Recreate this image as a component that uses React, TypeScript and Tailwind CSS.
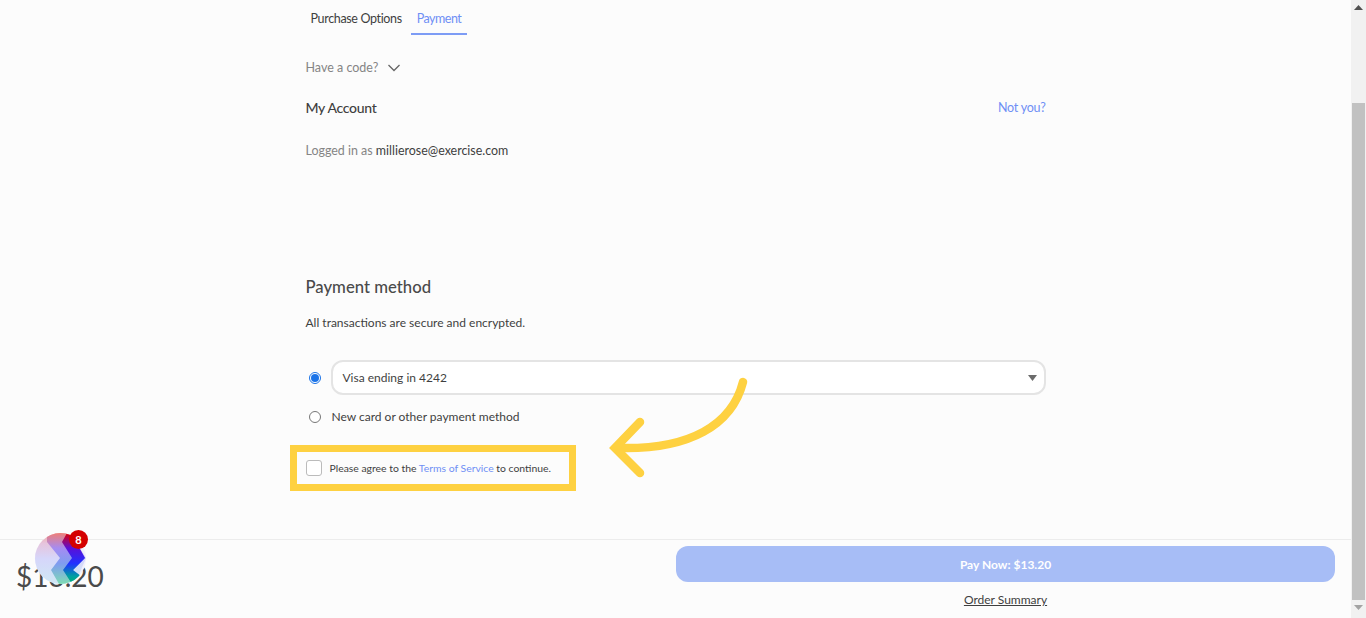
import React from "react";

function Arrow() {
  return (
    <svg className="absolute left-[600px] top-[370px]" width="160" height="115" viewBox="600 370 160 115" fill="none">
      <path d="M743 382C732 425 690 450 618 448" stroke="#fed141" strokeWidth="8.5" strokeLinecap="round" />
      <path d="M640 422L615 448L640 473" stroke="#fed141" strokeWidth="8.5" strokeLinecap="round" strokeLinejoin="miter" />
    </svg>
  );
}

function Bubble() {
  return (
    <div className="absolute left-[35px] top-[533px] h-[51px] w-[51px]">
      <div className="absolute inset-0 overflow-hidden rounded-full bg-[#f2f0fb]">
        <svg width="51" height="51" viewBox="0 0 51 51">
          <defs>
            <linearGradient id="base" x1="0" y1="0" x2="0" y2="1">
              <stop offset="0" stopColor="#f3a79f" />
              <stop offset="0.2" stopColor="#e6c4dc" />
              <stop offset="0.5" stopColor="#d6d6fa" />
              <stop offset="1" stopColor="#cfe8f4" />
            </linearGradient>
            <linearGradient id="mid" x1="0" y1="0" x2="0" y2="1">
              <stop offset="0" stopColor="#ef7f78" />
              <stop offset="0.3" stopColor="#a58cf2" />
              <stop offset="0.6" stopColor="#7f9cf0" />
              <stop offset="1" stopColor="#7fdcb4" />
            </linearGradient>
            <linearGradient id="strong" x1="0" y1="0" x2="0" y2="1">
              <stop offset="0" stopColor="#e00000" />
              <stop offset="0.3" stopColor="#5a10d8" />
              <stop offset="0.6" stopColor="#2030ff" />
              <stop offset="0.85" stopColor="#00a0a0" />
              <stop offset="1" stopColor="#00b070" />
            </linearGradient>
          </defs>
          <path d="M0 0H36L51 25L40 51H0Z" fill="url(#base)" />
          <path d="M12 0H36L50 25L38 37L46 51H24L16 37L25 25L12 9Z" fill="url(#mid)" />
          <path d="M27 9L32 0H36L50 25L38 37L46 43L37 51L28 37L37 25Z" fill="url(#strong)" />
        </svg>
      </div>
      <div className="absolute left-[34px] top-[-3px] flex h-[19px] w-[19px] items-center justify-center rounded-full bg-[#d40000] text-[11px] font-bold leading-none text-white">
        8
      </div>
    </div>
  );
}

export default function App() {
  return (
    <div className="relative flex h-[618px] overflow-hidden bg-[#fcfcfc] text-[#4a4a4a] [font-family:Lato,'Liberation_Sans',sans-serif]">
      <div className="flex min-w-0 flex-1 flex-col">
        <main className="mx-auto h-[539px] w-[740px]">
          <nav className="flex h-[35px] pl-[1px] text-[12.5px]">
            <span className="px-[4px] pt-[10px] leading-[17px] tracking-[-0.35px] text-[#3f3f3f]">Purchase Options</span>
            <span className="ml-[5px] border-b-2 border-[#7d9cf5] px-[6px] pt-[10px] leading-[17px] tracking-[-0.5px] text-[#6f8ff5]">Payment</span>
          </nav>
          <div className="mt-[24px] flex items-center gap-[10px] text-[12.5px] leading-[17px] text-[#858585]">
            Have a code?
            <svg width="12" height="8" viewBox="0 0 12 8" fill="none" stroke="#666" strokeWidth="1.3"><path d="M0.5 1L6 6.5L11.5 1" /></svg>
          </div>
          <div className="mt-[22px] flex items-center justify-between">
            <span className="text-[14px] font-medium leading-[20px] tracking-[-0.3px] text-[#3f3f3f]">My Account</span>
            <span className="text-[12.5px] leading-[18px] tracking-[-0.25px] text-[#6f8ff5]">Not you?</span>
          </div>
          <p className="mt-[24px] text-[12.45px] leading-[17px] text-[#858585]">
            Logged in as <span className="text-[#3f3f3f]">millierose@exercise.com</span>
          </p>
          <h2 className="mt-[116px] text-[16.7px] font-medium leading-[24px] text-[#4a4a4a]">Payment method</h2>
          <p className="mt-[15px] text-[12px] leading-[17px] text-[#3f3f3f]">All transactions are secure and encrypted.</p>
          <div className="mt-[29px] flex items-center gap-[10px] pl-[3px]">
            <span className="flex h-[12px] w-[12px] items-center justify-center rounded-full border border-[#1a73e8] bg-white">
              <span className="h-[8px] w-[8px] rounded-full bg-[#1a73e8]" />
            </span>
            <div className="flex h-[35px] flex-1 items-center justify-between rounded-[12px] border-2 border-[#e4e4e4] bg-white pl-[10px] pr-[7px]">
              <span className="text-[12px] text-[#3f3f3f]">Visa ending in 4242</span>
              <svg width="9" height="6" viewBox="0 0 9 6"><path d="M0 0H9L4.5 6Z" fill="#6b6b6b" /></svg>
            </div>
          </div>
          <div className="mt-[13px] flex items-center gap-[11px] pl-[3px]">
            <span className="h-[12px] w-[12px] rounded-full border border-[#777] bg-white" />
            <span className="text-[12px] leading-[17px] text-[#3f3f3f]">New card or other payment method</span>
          </div>
          <div className="mt-[35px] flex items-center gap-[8px]">
            <span className="h-[16px] w-[16px] rounded-[3px] border border-[#bbb] bg-white" />
            <span className="text-[10.4px] leading-[16px] text-[#3f3f3f]">
              Please agree to the <span className="text-[#6f8ff5]">Terms of Service</span> to continue.
            </span>
          </div>
        </main>
        <footer className="flex h-[79px] border-t border-[#ececec]">
          <div className="w-[676px] pl-[16px] pt-[18px] text-[28px] leading-[36px] text-[#4a4a4a]">$13.20</div>
          <div className="flex flex-1 flex-col items-center pr-[16px] pt-[6px]">
            <button className="h-[36px] w-full rounded-[12px] bg-[#a7bdf6] pt-[1px] text-[12px] font-bold text-white">Pay Now: $13.20</button>
            <span className="mt-[9px] text-[12px] leading-[18px] text-[#3f3f3f] underline">Order Summary</span>
          </div>
        </footer>
      </div>
      <aside className="flex w-[15px] flex-col items-center bg-[#f1f1f1]">
        <svg className="mt-[5px]" width="9" height="5" viewBox="0 0 9 5"><path d="M0 5H9L4.5 0Z" fill="#505050" /></svg>
        <div className="mt-[93px] h-[497px] w-[13px] bg-[#c1c1c1]" />
        <svg className="mt-[5px]" width="9" height="5" viewBox="0 0 9 5"><path d="M0 0H9L4.5 5Z" fill="#a3a3a3" /></svg>
      </aside>
      <div className="absolute left-[290px] top-[445px] h-[46px] w-[286px] border-[7px] border-[#fed141]" />
      <Arrow />
      <Bubble />
    </div>
  );
}
